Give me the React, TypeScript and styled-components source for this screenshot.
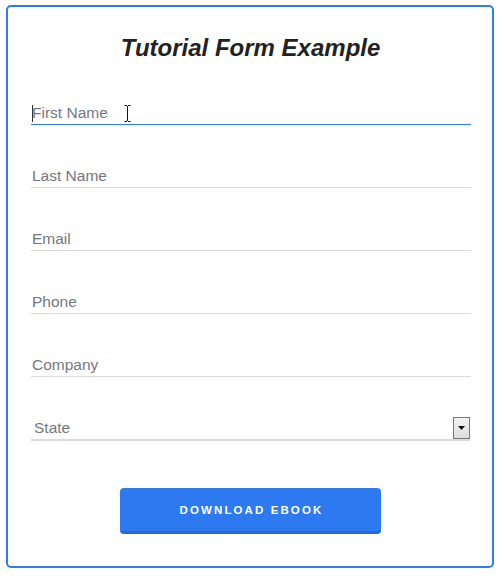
import React from "react";
import styled, { createGlobalStyle } from "styled-components";

const Global = createGlobalStyle`
  html, body { margin: 0; padding: 0; background: #ffffff; }
  body { font-family: "Liberation Sans", Arial, sans-serif; }
  * { box-sizing: border-box; }
`;

const Card = styled.form`
  width: 488px;
  margin: 5px 0 0 6px;
  border: 2px solid #2f7bef;
  border-radius: 5px;
  background: #fff;
  padding: 27px 21px 32px 23px;
  display: flex;
  flex-direction: column;
`;

const Title = styled.h1`
  margin: 0;
  font-family: "Liberation Sans", Arial, sans-serif;
  font-size: 24px;
  line-height: 28px;
  font-weight: 700;
  font-style: italic;
  color: #222222;
  text-align: center;
  padding-right: 1px;
`;

const Field = styled.div`
  position: relative;
  margin-top: 42px;
  display: flex;
`;

const Input = styled.input<{ $active?: boolean }>`
  flex: 1;
  height: 21px;
  padding: 0 0 2px 1px;
  margin: 0;
  border: none;
  border-bottom: 1px solid ${(p) => (p.$active ? "#2f7bef" : "#dcdcdc")};
  outline: none;
  background: transparent;
  font-family: "Liberation Sans", Arial, sans-serif;
  font-size: 15.5px;
  line-height: 18px;
  color: #333;
  &::placeholder { color: #77777f; opacity: 1; }
`;

const Caret = styled.span`
  position: absolute;
  left: 1px;
  top: 1px;
  width: 1px;
  height: 17px;
  background: #333;
`;

const Pointer = styled.svg`
  position: absolute;
  left: 93px;
  top: 1px;
`;

const SelectRow = styled.div`
  margin-top: 40px;
  display: flex;
  align-items: stretch;
  height: 24px;
  border-bottom: 2px solid #dcdcdc;
  margin-right: 1px;
`;

const Select = styled.select`
  flex: 1;
  appearance: none;
  -webkit-appearance: none;
  border: none;
  outline: none;
  background: transparent;
  padding: 0 0 2px 3px;
  margin: 0;
  height: 22px;
  font-family: "Liberation Sans", Arial, sans-serif;
  font-size: 15.5px;
  color: #77777f;
`;

const DropButton = styled.span`
  width: 17px;
  height: 22px;
  border: 1px solid #7a7676;
  background: linear-gradient(#f2f2f2, #dcdde0);
  display: flex;
  align-items: center;
  justify-content: center;
  pointer-events: none;
`;

const Button = styled.button`
  align-self: center;
  margin-top: 47px;
  margin-right: 1px;
  width: 261px;
  height: 46px;
  border: none;
  border-bottom: 3px solid #2668d6;
  border-radius: 4px;
  background: #2d7af0;
  color: #ffffff;
  font-family: "Liberation Sans", Arial, sans-serif;
  font-weight: 700;
  font-size: 11.5px;
  letter-spacing: 2.1px;
  padding: 0 0 0 2px;
  cursor: pointer;
`;

const fields = ["Last Name", "Email", "Phone", "Company"];

export default function App() {
  return (
    <>
      <Global />
      <Card onSubmit={(e) => e.preventDefault()}>
        <Title>Tutorial Form Example</Title>
        <Field>
          <Input $active placeholder="First Name" />
          <Caret />
          <Pointer width="7" height="17" viewBox="0 0 7 17">
            <path d="M0.5 0.5h2.5M4 0.5h2.5M3.5 1v15M0.5 16.5h2.5M4 16.5h2.5" stroke="#111" strokeWidth="1" fill="none" />
          </Pointer>
        </Field>
        {fields.map((f) => (
          <Field key={f}>
            <Input placeholder={f} />
          </Field>
        ))}
        <SelectRow>
          <Select defaultValue="">
            <option value="">State</option>
          </Select>
          <DropButton>
            <svg width="7" height="4" viewBox="0 0 7 4">
              <path d="M0 0h7L3.5 4z" fill="#111" />
            </svg>
          </DropButton>
        </SelectRow>
        <Button type="submit">DOWNLOAD EBOOK</Button>
      </Card>
    </>
  );
}
